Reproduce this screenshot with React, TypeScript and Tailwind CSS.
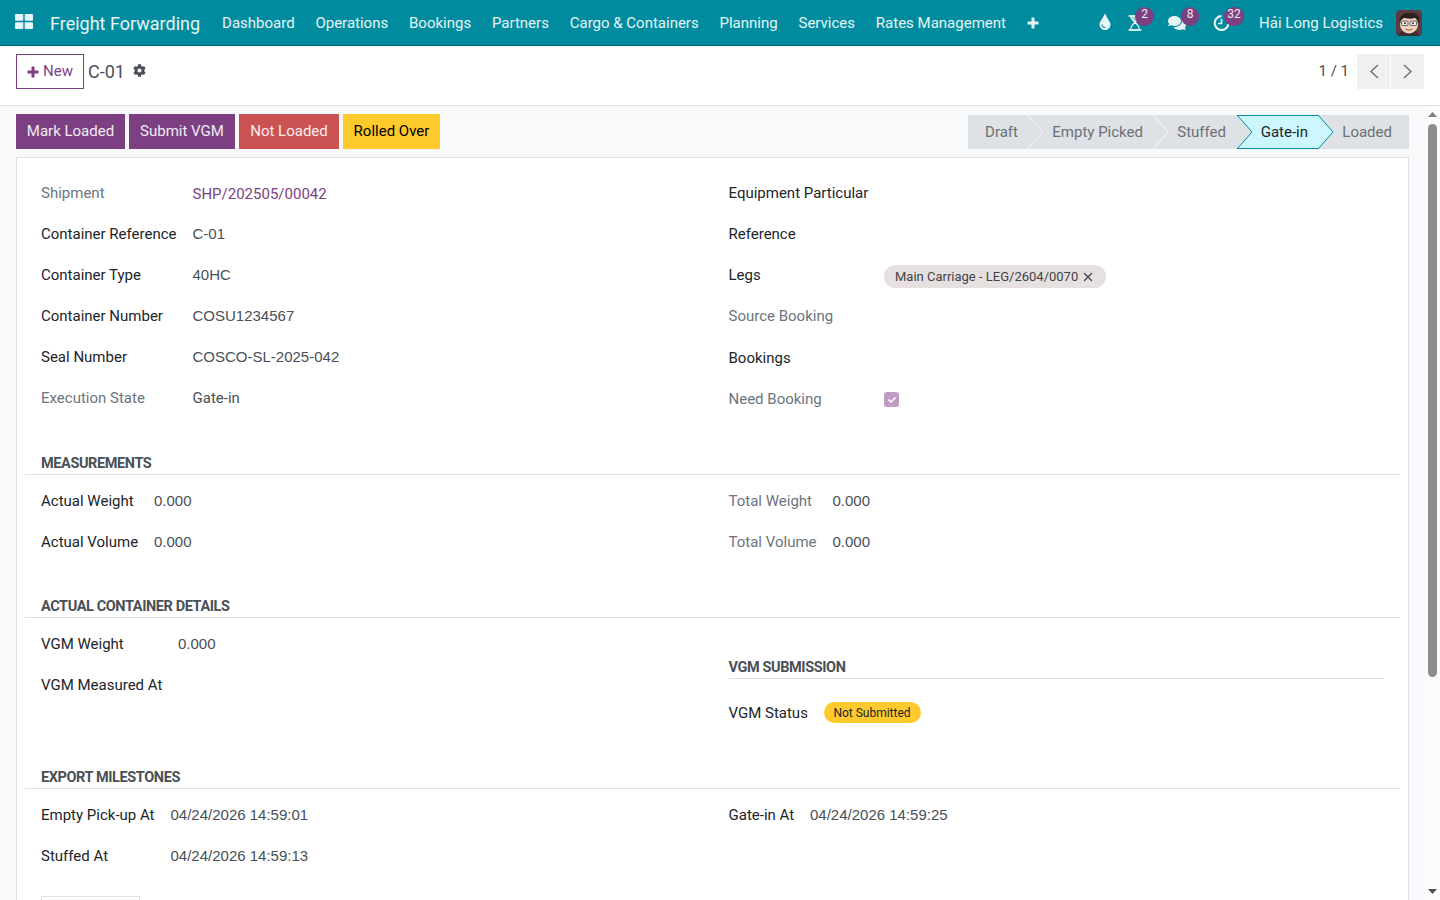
import { FaComments, FaCog, FaTint, FaCheck } from "react-icons/fa";
import { X } from "lucide-react";

const font = "font-['Roboto','Liberation_Sans',sans-serif]";
const navItems = ["Dashboard", "Operations", "Bookings", "Partners", "Cargo & Containers", "Planning", "Services", "Rates Management"];

function Plus() {
  return (
    <svg viewBox="0 0 12 12" className="w-[12px] h-[12px] fill-current">
      <path d="M4.500 1a.500.500 0 0 1 .5-.500h2a.500.500 0 0 1 .5.500v3.500H11a.500.500 0 0 1 .5.500v2a.500.500 0 0 1-.5.500H7.500V11a.500.500 0 0 1-.5.500H5a.500.500 0 0 1-.5-.500V7.500H1a.500.500 0 0 1-.5-.500V5a.500.500 0 0 1 .5-.500h3.500z" />
    </svg>
  );
}

function Badge({ children, className }: { children: React.ReactNode; className: string }) {
  return (
    <span className={`absolute -top-[8px] h-[19px] rounded-full bg-[#7c3f82] text-[12px] leading-[15px] text-center text-white/90 ${className}`}>
      {children}
    </span>
  );
}

function Avatar() {
  return (
    <svg viewBox="0 0 26 26" className="w-[26px] h-[26px] rounded-[4px]">
      <rect width="26" height="26" fill="#5b3a44" />
      <path d="M3 26c1-5 5-6 10-6s9 1 10 6z" fill="#3d2c33" />
      <ellipse cx="13" cy="14.500" rx="9" ry="9" fill="#f2d3bd" />
      <path d="M3.500 12c-1-7 5-9 9.500-9 2-1 9 0 10 4.500 1 2 0 4 0 5-1-2-2-4.500-4-4.500-3 1-7 1-10 0-2 0-4.500 2-5.500 4z" fill="#2c211d" />
      <rect x="5.500" y="11" width="6.500" height="4.500" rx="1" fill="#e8e8e8" stroke="#444" strokeWidth="0.800" />
      <rect x="14" y="11" width="6.500" height="4.500" rx="1" fill="#e8e8e8" stroke="#444" strokeWidth="0.800" />
      <circle cx="9" cy="13.200" r="0.900" fill="#222" />
      <circle cx="17" cy="13.200" r="0.900" fill="#222" />
      <path d="M9.500 19c2 1.500 5 1.500 7 0" stroke="#a44" strokeWidth="1" fill="none" />
    </svg>
  );
}

function Navbar() {
  return (
    <header className="h-[46px] shrink-0 bg-[#008c9e] border-b border-[#005f6b] flex items-center text-white/90 text-[15px] pt-px">
      <svg viewBox="0 0 18 15" className="w-[18px] h-[15px] ml-[14.500px] -mt-[3px] fill-white/90">
        <rect x="0" y="0" width="8.300" height="6.800" rx="1" />
        <rect x="9.700" y="0" width="8.300" height="6.800" rx="1" />
        <rect x="0" y="8.200" width="8.300" height="6.800" rx="1" />
        <rect x="9.700" y="8.200" width="8.300" height="6.800" rx="1" />
      </svg>
      <span className="ml-[17.500px] text-[18px] mr-[22px]">Freight Forwarding</span>
      <nav className="flex items-center gap-[20.800px]">
        {navItems.map((item) => (
          <span key={item}>{item}</span>
        ))}
        <Plus />
      </nav>
      <div className="ml-auto flex items-center pr-[18px]">
        <FaTint className="w-[12px] h-[16px] mr-[17px] -mt-[2px]" />
        <span className="relative mr-[25px]">
          <svg viewBox="0 0 14 16" className="block w-[14px] h-[16px] fill-none stroke-white/90" strokeWidth="1.100">
            <path d="M0.500 1h13M0.500 15h13" strokeWidth="1.600" />
            <path d="M2.500 1c0 5 9 7 9 14h-9c0-7 9-9 9-14z" />
            <path d="M3 1.500h8c0 3-2.500 4-4 6-1.500-2-4-3-4-6z" fill="#ffffff" fillOpacity="0.6" stroke="none" />
          </svg>
          <Badge className="left-[7px] w-[19px]">2</Badge>
        </span>
        <span className="relative mr-[26px]">
          <FaComments className="block w-[20px] h-[16px]" />
          <Badge className="left-[14px] w-[18px]">8</Badge>
        </span>
        <span className="relative mr-[29px]">
          <svg viewBox="0 0 17 16" className="block w-[17px] h-[16px] fill-none stroke-white/90" strokeWidth="2.200">
            <path d="M8.500 1.200a6.900 6.900 0 1 0 7 7" />
            <path d="M8.500 4v4.500H5" strokeWidth="1.600" />
          </svg>
          <Badge className="left-[11px] w-[20px]">32</Badge>
        </span>
        <span className="mr-[13px]">Hải Long Logistics</span>
        <Avatar />
      </div>
    </header>
  );
}

function Chevron({ dir }: { dir: "left" | "right" }) {
  return (
    <svg viewBox="0 0 10 15" className="w-[10px] h-[15px] fill-none stroke-[#6b6f74]" strokeWidth="1.400">
      <path d={dir === "left" ? "M9 1L2 7.500L9 14" : "M1 1L8 7.500L1 14"} />
    </svg>
  );
}

function ControlPanel() {
  return (
    <div className="h-[60px] shrink-0 bg-white border-b border-[#dee2e6] flex items-start pt-[8px] px-[16px]">
      <button className="h-[35px] w-[68px] border border-[#7c3f82] text-[#7c3f82] text-[15px] flex items-center justify-center gap-[4px]">
        <Plus />
        New
      </button>
      <span className="ml-[4px] h-[35px] leading-[36px] text-[18px] text-[#495057]">C-01</span>
      <FaCog className="ml-[8px] mt-[10px] w-[13px] h-[13px] text-[#495057]" />
      <div className="ml-auto flex items-center text-[15px] text-[#495057]">
        <span className="mr-[8px]">1 / 1</span>
        <span className="w-[33px] h-[35px] bg-[#eff0f1] flex items-center justify-center mr-px">
          <Chevron dir="left" />
        </span>
        <span className="w-[33px] h-[35px] bg-[#eff0f1] flex items-center justify-center">
          <Chevron dir="right" />
        </span>
      </div>
    </div>
  );
}

function StatusSep() {
  return (
    <svg viewBox="0 0 16 34" className="absolute top-0 -right-[15px] w-[16px] h-[34px] z-10">
      <path d="M0 0L15 17L0 34" fill="#dee2e6" stroke="#f3f4f6" strokeWidth="1" />
    </svg>
  );
}

function StatusBar() {
  const steps = [
    { label: "Draft", w: "w-[61px]" },
    { label: "Empty Picked", w: "w-[125px]" },
    { label: "Stuffed", w: "w-[83px]" },
  ];
  return (
    <div className="flex h-[34px] text-[15px] text-[#6b7075] mt-px">
      {steps.map((s, i) => (
        <div key={s.label} className={`relative ${s.w} bg-[#dee2e6] flex items-center justify-end pr-[11px]`}>
          {s.label}
          {i < 2 && <StatusSep />}
        </div>
      ))}
      <div className="relative w-[82px] h-[34px] bg-[#cdf7ff] border-y border-[#008c9e] flex items-center justify-end pr-[11px] text-[#212529]">
        Gate-in
        <svg viewBox="0 0 16 34" className="absolute -top-px -right-[15px] w-[16px] h-[34px] z-20">
          <path d="M0 0L15 17L0 34z" fill="#cdf7ff" />
          <path d="M0 0L15 17L0 34" fill="none" stroke="#008c9e" strokeWidth="1" />
        </svg>
        <svg viewBox="0 0 16 34" className="absolute -top-px left-0 w-[16px] h-[34px] z-20">
          <path d="M0 0L15 17L0 34" fill="#dee2e6" stroke="#008c9e" strokeWidth="1" />
        </svg>
      </div>
      <div className="w-[90px] bg-[#dee2e6] flex items-center justify-end pr-[17px]">Loaded</div>
    </div>
  );
}

function ActionBar() {
  return (
    <div className="flex justify-between px-[16px] pt-[8px] h-[51px]">
      <div className="flex gap-[4px] text-[15px] h-[35px]">
        <button className="w-[109px] bg-[#7c3f82] text-white/90">Mark Loaded</button>
        <button className="w-[106px] bg-[#7c3f82] text-white/90">Submit VGM</button>
        <button className="w-[100px] bg-[#cb5252] text-white/90">Not Loaded</button>
        <button className="w-[97px] bg-[#ffca2c] text-black">Rolled Over</button>
      </div>
      <StatusBar />
    </div>
  );
}

function Row({ label, value, muted, lw, link }: { label: string; value?: React.ReactNode; muted?: boolean; lw: string; link?: boolean }) {
  const plain = typeof value === "string" && !link;
  return (
    <div className="h-[41px] flex items-center pl-[16px]">
      <span className={`${lw} shrink-0 ${muted ? "text-[#6c757d]" : "text-[#212529]"}`}>{label}</span>
      <span className={`${link ? "text-[#7c3f82] mt-[2px]" : "text-[#495057]"} ${plain ? "font-['Liberation_Sans',sans-serif]" : ""}`}>{value}</span>
    </div>
  );
}

function SectionTitle({ children, className }: { children: React.ReactNode; className?: string }) {
  return (
    <div className={`h-[22px] border-b border-[#dee2e6] pl-[16px] text-[14.500px] font-bold leading-[21px] tracking-[-0.4px] text-[#495057] ${className ?? ""}`}>
      {children}
    </div>
  );
}

function Sheet() {
  const top = "w-[151.500px]";
  const rightLw = "w-[155.500px]";
  return (
    <div className="mx-[16px] w-[1393px] bg-white border border-[#dee2e6] px-[8px] pt-[15px] pb-[178px] text-[15px]">
      <div className="grid grid-cols-2">
        <div>
          <Row lw={top} label="Shipment" value="SHP/202505/00042" muted link />
          <Row lw={top} label="Container Reference" value="C-01" />
          <Row lw={top} label="Container Type" value="40HC" />
          <Row lw={top} label="Container Number" value="COSU1234567" />
          <Row lw={top} label="Seal Number" value="COSCO-SL-2025-042" />
          <Row lw={top} label="Execution State" value={<>Gate-in</>} muted />
        </div>
        <div>
          <Row lw={rightLw} label="Equipment Particular" />
          <Row lw={rightLw} label="Reference" />
          <Row
            lw={rightLw}
            label="Legs"
            value={
              <span className="inline-flex items-center h-[23px] w-[222px] mt-[2px] pt-px pl-[11px] rounded-full bg-[#e7e0e0] text-[13px] text-[#3f4449]">
                Main Carriage - LEG/2604/0070
                <X className="w-[14px] h-[14px] ml-[3px]" strokeWidth={2.200} />
              </span>
            }
          />
          <Row lw={rightLw} label="Source Booking" muted />
          <div className="h-px" />
          <Row lw={rightLw} label="Bookings" />
          <Row
            lw={rightLw}
            label="Need Booking"
            muted
            value={
              <span className="flex items-center justify-center w-[15px] h-[15px] rounded-[3px] bg-[#c09cc4]">
                <FaCheck className="w-[8px] h-[8px] text-white" />
              </span>
            }
          />
        </div>
      </div>

      <SectionTitle className="mt-[33px]">MEASUREMENTS</SectionTitle>
      <div className="grid grid-cols-2 mt-[6px]">
        <div>
          <Row lw="w-[113px]" label="Actual Weight" value="0.000" />
          <Row lw="w-[113px]" label="Actual Volume" value="0.000" />
        </div>
        <div>
          <Row lw="w-[104px]" label="Total Weight" value="0.000" muted />
          <Row lw="w-[104px]" label="Total Volume" value="0.000" muted />
        </div>
      </div>

      <SectionTitle className="mt-[33px]">ACTUAL CONTAINER DETAILS</SectionTitle>
      <div className="grid grid-cols-2 mt-[6px]">
        <div>
          <Row lw="w-[137px]" label="VGM Weight" value="0.000" />
          <Row lw="w-[137px]" label="VGM Measured At" />
        </div>
        <div className="pt-[33px]">
          <SectionTitle className="mr-[16px] !pl-0 ml-[16px]">VGM SUBMISSION</SectionTitle>
          <div className="mt-[14px]">
            <Row
              lw="w-[95px]"
              label="VGM Status"
              value={
                <span className="flex items-center justify-center w-[97px] h-[21px] -mt-[2px] rounded-full bg-[#ffca2c] text-[12px] text-[#212529]">Not Submitted</span>
              }
            />
          </div>
        </div>
      </div>

      <SectionTitle className="mt-[33px]">EXPORT MILESTONES</SectionTitle>
      <div className="grid grid-cols-2 mt-[6px]">
        <div>
          <Row lw="w-[129.500px]" label="Empty Pick-up At" value="04/24/2026 14:59:01" />
          <Row lw="w-[129.500px]" label="Stuffed At" value="04/24/2026 14:59:13" />
        </div>
        <div>
          <Row lw="w-[81.500px]" label="Gate-in At" value="04/24/2026 14:59:25" />
        </div>
      </div>
      <div className="ml-[16px] mt-[19px] w-[99px] h-[40px] border border-[#dee2e6]" />
    </div>
  );
}

// headless browser hides native scrollbars, so this one is drawn
function Scrollbar() {
  return (
    <aside className="w-[15px] shrink-0 bg-[#fbfbfb] flex flex-col items-center pt-[6px] pb-[6px]">
      <svg viewBox="0 0 9 5" className="w-[9px] h-[5px] fill-[#7f7f7f]">
        <path d="M4.500 0L9 5H0z" />
      </svg>
      <div className="mt-[7px] w-[9px] h-[553px] rounded-full bg-[#8c8c8c]" />
      <svg viewBox="0 0 9 5" className="mt-auto w-[9px] h-[5px] fill-[#505050]">
        <path d="M0 0H9L4.500 5z" />
      </svg>
    </aside>
  );
}

export default function App() {
  return (
    <div className={`${font} w-[1440px] h-[900px] overflow-hidden flex flex-col`}>
      <Navbar />
      <ControlPanel />
      <div className="flex-1 min-h-0 flex">
        <main className="flex-1 overflow-hidden bg-[#f8f9fa]">
          <ActionBar />
          <Sheet />
        </main>
        <Scrollbar />
      </div>
    </div>
  );
}
